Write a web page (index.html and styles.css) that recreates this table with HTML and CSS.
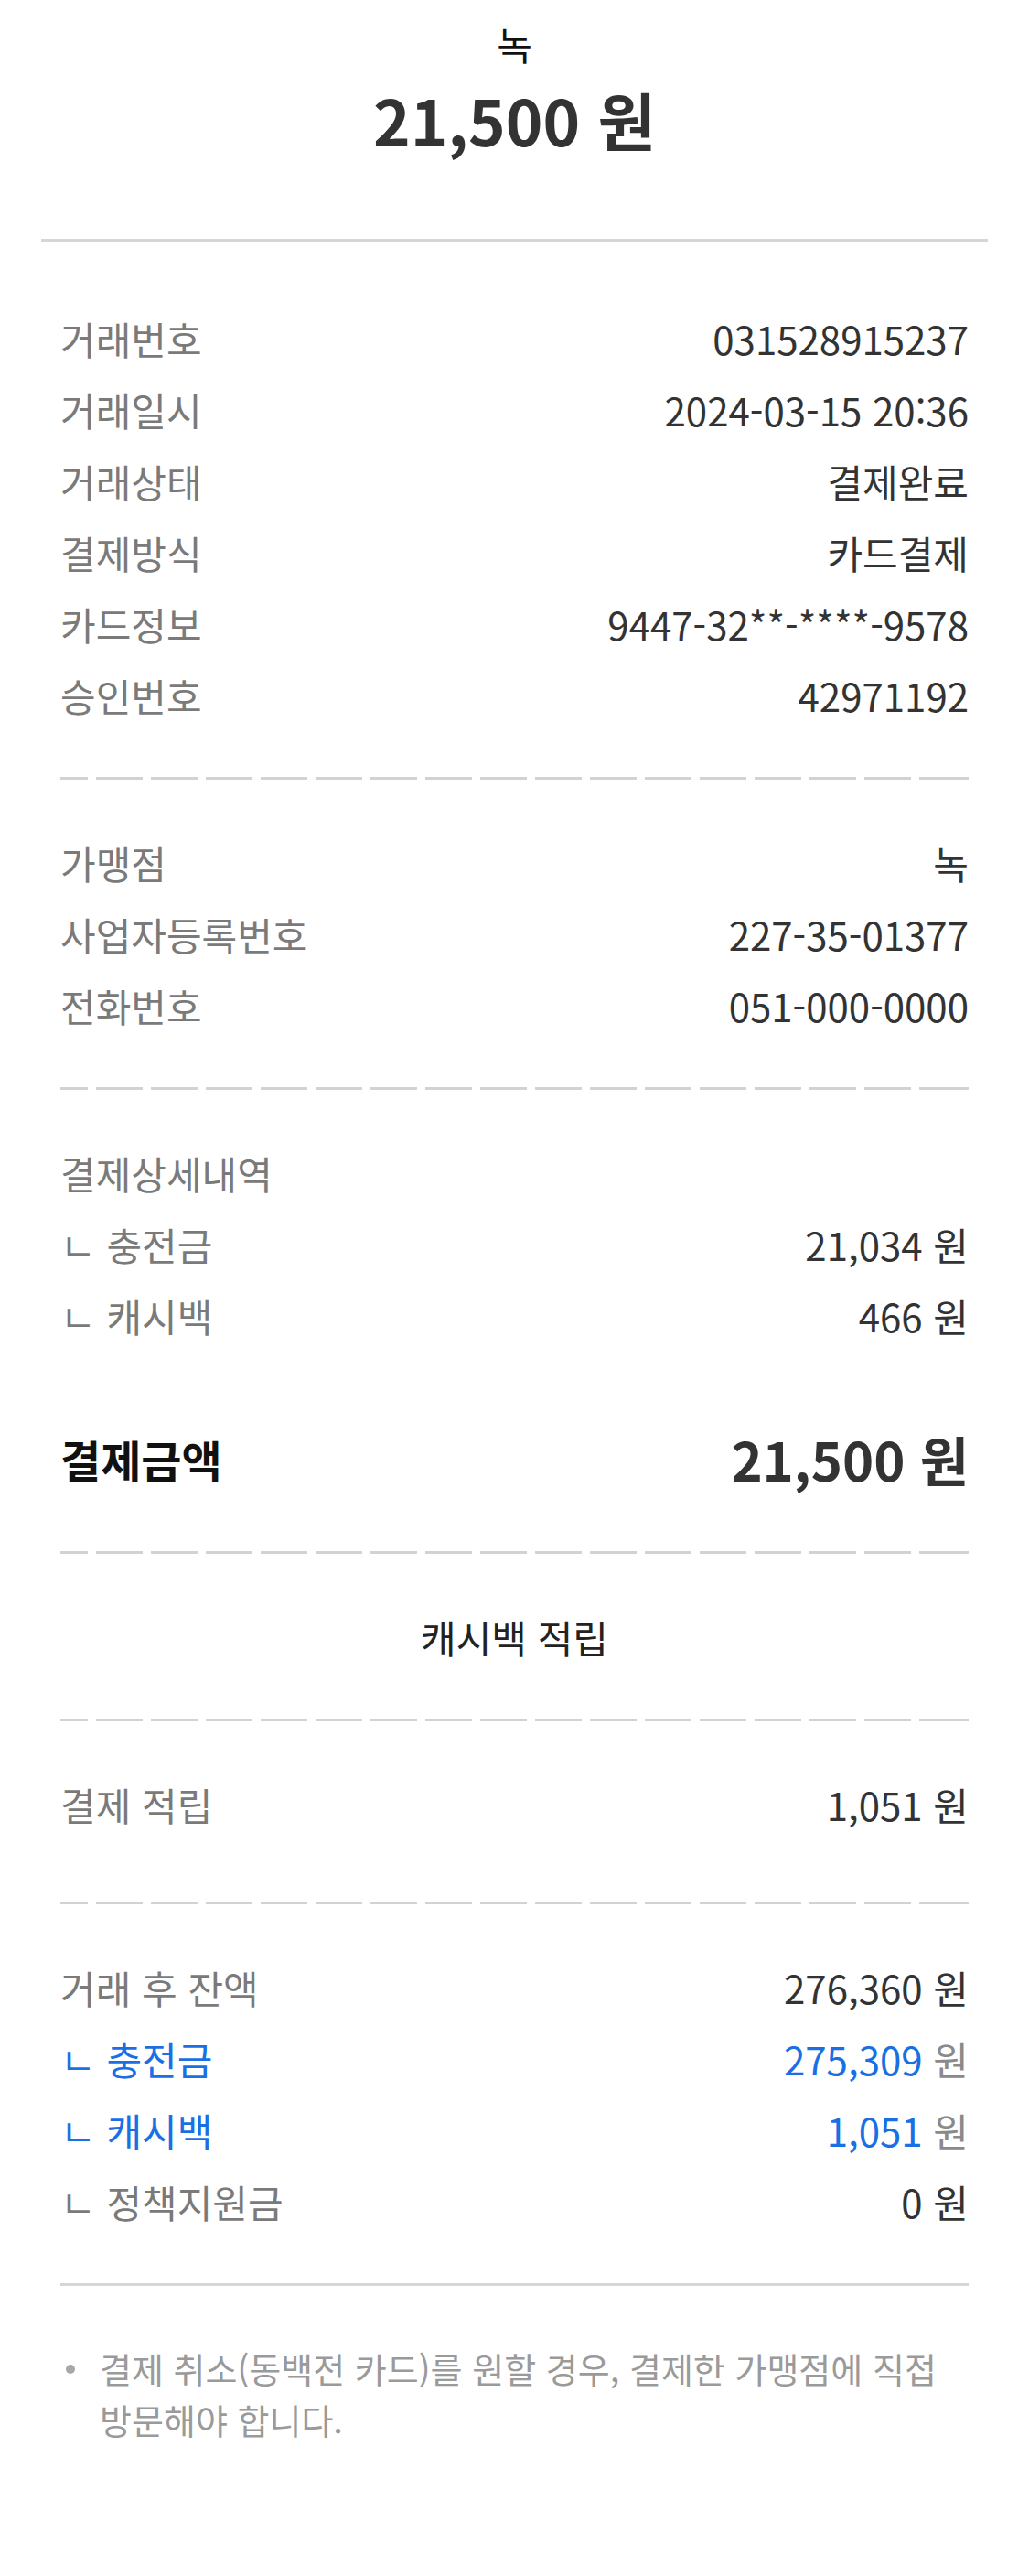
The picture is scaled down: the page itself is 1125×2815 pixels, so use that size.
FILE: index.html
```html
<!DOCTYPE html>
<html lang="ko">
<head>
<meta charset="utf-8">
<title>결제 상세</title>
<link rel="stylesheet" href="styles.css">
</head>
<body>
<div class="page">
  <header class="head">
    <div class="store">녹</div>
    <div class="total">21,500 원</div>
  </header>
  <div class="rule-top"></div>

  <div class="content">
    <section class="sec sec-first">
      <div class="row"><span class="label">거래번호</span><span class="value">031528915237</span></div>
      <div class="row"><span class="label">거래일시</span><span class="value">2024-03-15 20:36</span></div>
      <div class="row"><span class="label">거래상태</span><span class="value">결제완료</span></div>
      <div class="row"><span class="label">결제방식</span><span class="value">카드결제</span></div>
      <div class="row"><span class="label">카드정보</span><span class="value">9447-32**-****-9578</span></div>
      <div class="row"><span class="label">승인번호</span><span class="value">42971192</span></div>
    </section>
    <div class="dash"></div>

    <section class="sec">
      <div class="row"><span class="label">가맹점</span><span class="value">녹</span></div>
      <div class="row"><span class="label">사업자등록번호</span><span class="value">227-35-01377</span></div>
      <div class="row"><span class="label">전화번호</span><span class="value">051-000-0000</span></div>
    </section>
    <div class="dash"></div>

    <section class="sec">
      <div class="row"><span class="label">결제상세내역</span></div>
      <div class="row"><span class="label">ㄴ 충전금</span><span class="value">21,034 원</span></div>
      <div class="row"><span class="label">ㄴ 캐시백</span><span class="value">466 원</span></div>
      <div class="row row-total"><span class="total-label">결제금액</span><span class="total-value">21,500 원</span></div>
    </section>
    <div class="dash"></div>

    <section class="sec">
      <div class="row row-center"><span class="title">캐시백 적립</span></div>
    </section>
    <div class="dash"></div>

    <section class="sec sec-earn">
      <div class="row"><span class="label">결제 적립</span><span class="value">1,051 원</span></div>
    </section>
    <div class="dash"></div>

    <section class="sec">
      <div class="row"><span class="label">거래 후 잔액</span><span class="value">276,360 원</span></div>
      <div class="row"><span class="label blue">ㄴ 충전금</span><span class="value"><span class="blue">275,309</span> <span class="unit">원</span></span></div>
      <div class="row"><span class="label blue">ㄴ 캐시백</span><span class="value"><span class="blue">1,051</span> <span class="unit">원</span></span></div>
      <div class="row"><span class="label">ㄴ 정책지원금</span><span class="value">0 원</span></div>
    </section>
    <div class="rule-bottom"></div>

    <ul class="notes">
      <li>결제 취소(동백전 카드)를 원할 경우, 결제한 가맹점에 직접 방문해야 합니다.</li>
    </ul>
  </div>
</div>
</body>
</html>
```

FILE: styles.css
```css
html, body {
  margin: 0;
  padding: 0;
  background: #ffffff;
}

body {
  font-family: "Noto Sans CJK KR", "Noto Sans", sans-serif;
  color: #333333;
}

.page {
  width: 1125px;
  min-height: 2815px;
}

.head {
  padding-top: 20px;
  text-align: center;
}

.store {
  font-size: 42px;
  line-height: 56px;
  color: #111111;
}

.total {
  margin-top: 4px;
  font-size: 69px;
  line-height: 100px;
  font-weight: 700;
  color: #333333;
}

.rule-top {
  margin: 81px 45px 0;
  height: 3px;
  background: #d6d6d6;
}

.content {
  padding: 0 66px;
}

.sec {
  padding: 51px 0 51px;
}

.sec-first {
  padding-top: 66px;
}

.sec-earn {
  padding-bottom: 68px;
}

.row {
  display: flex;
  justify-content: space-between;
  align-items: center;
  height: 78px;
}

.label {
  font-size: 42px;
  color: #7a7a7a;
  white-space: nowrap;
}

.value {
  font-size: 42px;
  color: #333333;
  white-space: nowrap;
}

.blue {
  color: #1a6fe3;
}

.unit {
  color: #8a8a8a;
}

.row-total {
  height: 100px;
  margin-top: 68px;
}

.total-label {
  font-size: 48px;
  font-weight: 700;
  color: #111111;
}

.total-value {
  font-size: 58px;
  font-weight: 700;
  color: #333333;
}

.row-center {
  justify-content: center;
}

.title {
  font-size: 42px;
  color: #222222;
}

.dash {
  height: 3px;
  background-image: repeating-linear-gradient(to right, #d2d2d2 0 51px, transparent 51px 60px);
  background-position: -21px 0;
}

.rule-bottom {
  height: 3px;
  background: #d6d6d6;
}

.notes {
  list-style: none;
  margin: 0;
  padding: 62px 0 0 43px;
}

.notes li {
  position: relative;
  font-size: 38px;
  line-height: 56px;
  color: #9a9a9a;
  word-break: keep-all;
}

.notes li::before {
  content: "";
  position: absolute;
  left: -37px;
  top: 24px;
  width: 10px;
  height: 10px;
  border-radius: 50%;
  background: #a8a8a8;
}
```
